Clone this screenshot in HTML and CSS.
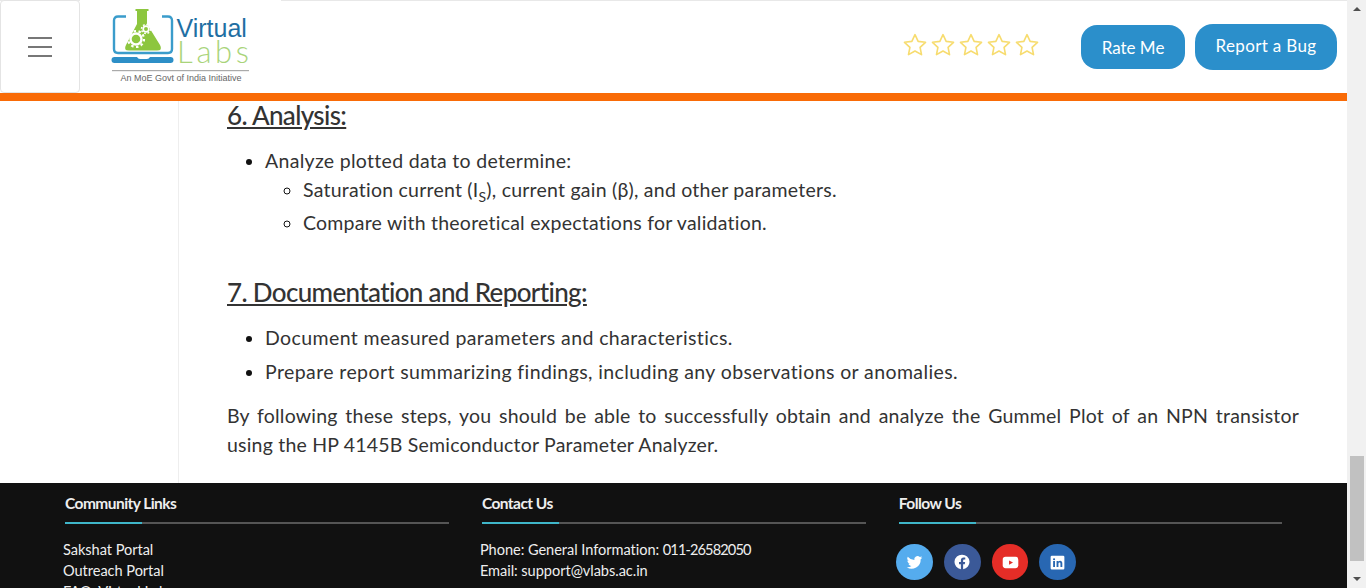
FILE: index.html
```html
<!DOCTYPE html>
<html lang="en">
<head>
<meta charset="utf-8">
<title>Virtual Labs</title>
<link rel="stylesheet" href="styles.css">
</head>
<body>
<div class="page">
  <header class="header">
    <div class="header-left">
      <button class="menu-btn" aria-label="Menu"><span></span><span></span><span></span></button>
      <div class="logo">
        <svg class="logo-svg" width="150" height="78" viewBox="0 0 150 78">
          <path d="M15 8.500 H7 Q3 8.500 3 12.500 V41 Q3 45 7 45 H57 Q61 45 61 41 V12.500 Q61 8.500 57 8.500 H51" fill="none" stroke="#3a9ccb" stroke-width="2.400"/>
          <path d="M3.500 49 H26 Q27 51 29 51 H36 Q38 51 39 49 H59.500 Q62.500 49 62.500 52 Q62.500 55 59.500 55 H3.500 Q.500 55 .500 52 Q.500 49 3.500 49Z" fill="#2d8fc7"/>
          <path d="M24.500 1 H37.500 V3 H36 V16 L49 37 Q52 42.500 46 42.500 H18 Q12 42.500 15 37 L26 16 V3 H24.500Z" fill="#8dc63f"/>
          <circle cx="25" cy="31" r="5.500" fill="none" stroke="#fff" stroke-width="2.400"/>
          <circle cx="25" cy="31" r="8" fill="none" stroke="#fff" stroke-width="2.200" stroke-dasharray="2.500 2.500"/>
          <circle cx="35" cy="21" r="2.800" fill="none" stroke="#fff" stroke-width="1.700"/>
          <circle cx="35" cy="21" r="4.500" fill="none" stroke="#fff" stroke-width="1.500" stroke-dasharray="1.800 1.700"/>
          <text x="65.500" y="29" class="logo-virtual">Virtual</text>
          <text x="66" y="55" class="logo-labs">Labs</text>
          <rect x="1" y="62" width="137" height="1.200" fill="#aaa"/>
          <text x="70" y="73" text-anchor="middle" class="logo-tag">An MoE Govt of India Initiative</text>
        </svg>
      </div>
    </div>
    <div class="header-right">
      <div class="stars">
        <svg class="star" viewBox="0 0 24 24"><use href="#star"/></svg>
        <svg class="star" viewBox="0 0 24 24"><use href="#star"/></svg>
        <svg class="star" viewBox="0 0 24 24"><use href="#star"/></svg>
        <svg class="star" viewBox="0 0 24 24"><use href="#star"/></svg>
        <svg class="star" viewBox="0 0 24 24"><use href="#star"/></svg>
      </div>
      <a class="btn btn-rate">Rate Me</a>
      <a class="btn btn-bug">Report a Bug</a>
    </div>
  </header>
  <main class="content">
    <aside class="sidebar"></aside>
    <article class="article">
      <h2 class="h-first">6. Analysis:</h2>
      <ul class="list">
        <li>Analyze plotted data to determine:
          <ul class="sublist">
            <li>Saturation current (I<sub>S</sub>), current gain (β), and other parameters.</li>
            <li>Compare with theoretical expectations for validation.</li>
          </ul>
        </li>
      </ul>
      <h2 class="h-second">7. Documentation and Reporting:</h2>
      <ul class="list list-tall">
        <li>Document measured parameters and characteristics.</li>
        <li>Prepare report summarizing findings, including any observations or anomalies.</li>
      </ul>
      <p class="para">By following these steps, you should be able to successfully obtain and analyze the Gummel Plot of an NPN transistor using the HP 4145B Semiconductor Parameter Analyzer.</p>
    </article>
  </main>
  <footer class="footer">
    <section class="fcol">
      <h4 class="ftitle">Community Links</h4>
      <div class="frule"></div>
      <ul class="flinks">
        <li>Sakshat Portal</li>
        <li>Outreach Portal</li>
        <li>FAQ: Virtual Labs</li>
      </ul>
    </section>
    <section class="fcol">
      <h4 class="ftitle">Contact Us</h4>
      <div class="frule"></div>
      <ul class="flinks">
        <li>Phone: General Information: <span class="digits">011-26582050</span></li>
        <li>Email: support@vlabs.ac.in</li>
      </ul>
    </section>
    <section class="fcol">
      <h4 class="ftitle">Follow Us</h4>
      <div class="frule"></div>
      <div class="socials">
        <a class="social tw"><svg viewBox="0 0 24 24" width="17" height="17"><path fill="#fff" d="M23 5.100c-.8.400-1.700.600-2.600.700.900-.600 1.600-1.400 2-2.500-.900.500-1.900.900-2.900 1.100A4.500 4.500 0 0 0 11.800 8.500 12.800 12.800 0 0 1 2.500 3.800a4.500 4.500 0 0 0 1.400 6c-.700 0-1.400-.200-2-.600 0 2.200 1.500 4.100 3.600 4.500-.700.200-1.400.200-2 .100.600 1.800 2.200 3.100 4.200 3.100A9 9 0 0 1 1 18.800 12.800 12.800 0 0 0 20.700 7.400c.900-.600 1.700-1.400 2.300-2.300z"/></svg></a>
        <a class="social fb"><svg viewBox="0 0 24 24" width="16" height="16"><path fill="#fff" d="M12 1a11 11 0 0 0-1.700 21.900v-7.700H7.500V12h2.800V9.600c0-2.800 1.600-4.300 4.100-4.300 1.200 0 2.500.200 2.500.200v2.700h-1.400c-1.400 0-1.800.900-1.800 1.700V12h3l-.500 3.200h-2.500v7.700A11 11 0 0 0 12 1z"/></svg></a>
        <a class="social yt"><svg viewBox="0 0 24 24" width="17" height="17"><path fill="#fff" d="M5 4h14a4 4 0 0 1 4 4v8a4 4 0 0 1-4 4H5a4 4 0 0 1-4-4V8a4 4 0 0 1 4-4z"/><path fill="#e52d27" d="M10 9l5.500 3-5.500 3z"/></svg></a>
        <a class="social li"><svg viewBox="0 0 24 24" width="15" height="15"><path fill="#fff" fill-rule="evenodd" d="M3 1h18a2 2 0 0 1 2 2v18a2 2 0 0 1-2 2H3a2 2 0 0 1-2-2V3a2 2 0 0 1 2-2zM5 9.500V19h3V9.500zM6.500 5a1.700 1.700 0 1 0 0 3.400 1.700 1.700 0 0 0 0-3.400zM10.500 9.500V19h3v-5c0-1.300.600-2.100 1.700-2.100s1.500.800 1.500 2.100v5h3v-5.600c0-2.700-1.400-4.100-3.500-4.100-1.300 0-2.200.600-2.700 1.400V9.500z"/></svg></a>
      </div>
    </section>
  </footer>
</div>
<div class="scrollbar">
  <div class="arrow-up"></div>
  <div class="track"><div class="thumb"></div></div>
  <div class="arrow-down"></div>
</div>
<svg class="defs" width="0" height="0"><defs><path id="star" d="M12 2.500l2.900 6.200 6.800.800-5 4.700 1.300 6.700-6-3.300-6 3.300 1.300-6.700-5-4.700 6.800-.800z" fill="none" stroke="#f7dc6f" stroke-width="1.500" stroke-linejoin="round"/></defs></svg>
</body>
</html>
```
FILE: styles.css
```css
* { box-sizing: border-box; }
html, body { margin: 0; padding: 0; height: 100%; overflow: hidden; }
body { display: flex; font-family: "Lato", "Open Sans", sans-serif; color: #333; background: #fff; }
.page { width: 1347px; height: 588px; display: flex; flex-direction: column; overflow: hidden; }
.defs { position: absolute; }

.header { height: 101px; flex: none; display: flex; justify-content: space-between; border-bottom: 8px solid #f96b07; border-top: 1px solid #e8e8e8; background: #fff; }
.header-left { display: flex; margin-top: -1px; }
.menu-btn { width: 80px; height: 93px; background: #fff; border: 1px solid #e4e4e4; border-radius: 4px; display: flex; flex-direction: column; align-items: center; justify-content: center; gap: 7px; padding: 0; }
.menu-btn span { display: block; width: 24px; height: 2px; background: #777; }
.logo { width: 201px; background: #fff; padding: 8px 0 0 31px; }
.logo-svg { display: block; }
.logo-virtual { font: 400 25px "Liberation Sans", sans-serif; fill: #1f6fa3; }
.logo-labs { font: 300 31px "Lato", sans-serif; fill: #a9d47a; letter-spacing: 3.700px; }
.logo-tag { font: 9px "Liberation Sans", sans-serif; fill: #666; }
.header-right { display: flex; align-items: center; padding-right: 10px; }
.stars { display: flex; gap: 2px; margin-right: 41px; margin-top: -5px; }
.star { width: 26px; height: 26px; display: block; }
.btn { display: flex; align-items: center; justify-content: center; background: #2b8fcb; color: #fff; font-size: 17px; }
.btn-rate { width: 104px; height: 44px; border-radius: 16px; margin-right: 10px; }
.btn-bug { width: 142px; height: 46px; border-radius: 18px; margin-top: -1px; padding-bottom: 2px; letter-spacing: .35px; }

.content { height: 382px; flex: none; display: flex; overflow: hidden; }
.sidebar { width: 179px; flex: none; border-right: 1px solid #eee; }
.article { flex: 1; padding: 0 48px; font-size: 19.500px; line-height: 29px; color: #333; letter-spacing: .3px; }
.article h2 { font-size: 26px; line-height: 30px; font-weight: 500; color: #333; text-decoration: underline; margin: 0; letter-spacing: -.65px; }
.article .h-first { line-height: 28px; }
.article .h-second { margin-top: 40px; }
.list { margin: 16px 0 0; padding: 0 0 0 38px; }
.list li::marker { color: #111; }
.h-first + .list { margin-top: 17px; }
.sublist { margin: 0; padding: 0 0 0 38px; list-style: circle; letter-spacing: .23px; }
.sublist li { margin-bottom: 4px; }
.sublist sub { font-size: 14px; line-height: 0; }
.list-tall { letter-spacing: .4px; }
.list-tall li { margin-bottom: 5px; }
.para { margin: 15px 0 0; text-align: justify; letter-spacing: .2px; }

.footer { flex: 1; background: #111; color: #eee; display: flex; padding-left: 65px; overflow: hidden; }
.fcol { width: 416.900px; flex: none; padding-top: 10px; }
.ftitle { margin: 0; font-size: 15.500px; line-height: 20px; font-weight: 700; color: #eee; letter-spacing: -.55px; }
.frule { width: 383.700px; height: 2px; margin-top: 9px; background: linear-gradient(to right, #3fb6c9 77px, #555 77px); }
.flinks { list-style: none; margin: 15px 0 0 -2px; padding: 0; font-size: 14.600px; line-height: 21px; letter-spacing: -.05px; }
.digits { letter-spacing: -.9px; }
.socials { display: flex; gap: 11px; margin: 20px 0 0 -2.500px; }
.social { width: 36.700px; height: 36px; border-radius: 50%; display: flex; align-items: center; justify-content: center; }
.tw { background: #55acee; }
.fb { background: #3b5998; }
.yt { background: #e52d27; }
.li { background: #2867b2; }

.scrollbar { width: 19px; height: 588px; flex: none; background: #f1f1f1; display: flex; flex-direction: column; align-items: center; }
.arrow-up { width: 0; height: 0; margin: 7px 0 6px; border: 4px solid transparent; border-top: 0; border-bottom: 4px solid #505050; }
.track { flex: 1; width: 100%; padding: 0 2.500px; display: flex; flex-direction: column; justify-content: flex-end; }
.thumb { height: 105px; background: #c1c1c1; margin-bottom: 10px; }
.arrow-down { width: 0; height: 0; margin: 6px 0 7px; border: 4px solid transparent; border-bottom: 0; border-top: 4px solid #505050; }
```
